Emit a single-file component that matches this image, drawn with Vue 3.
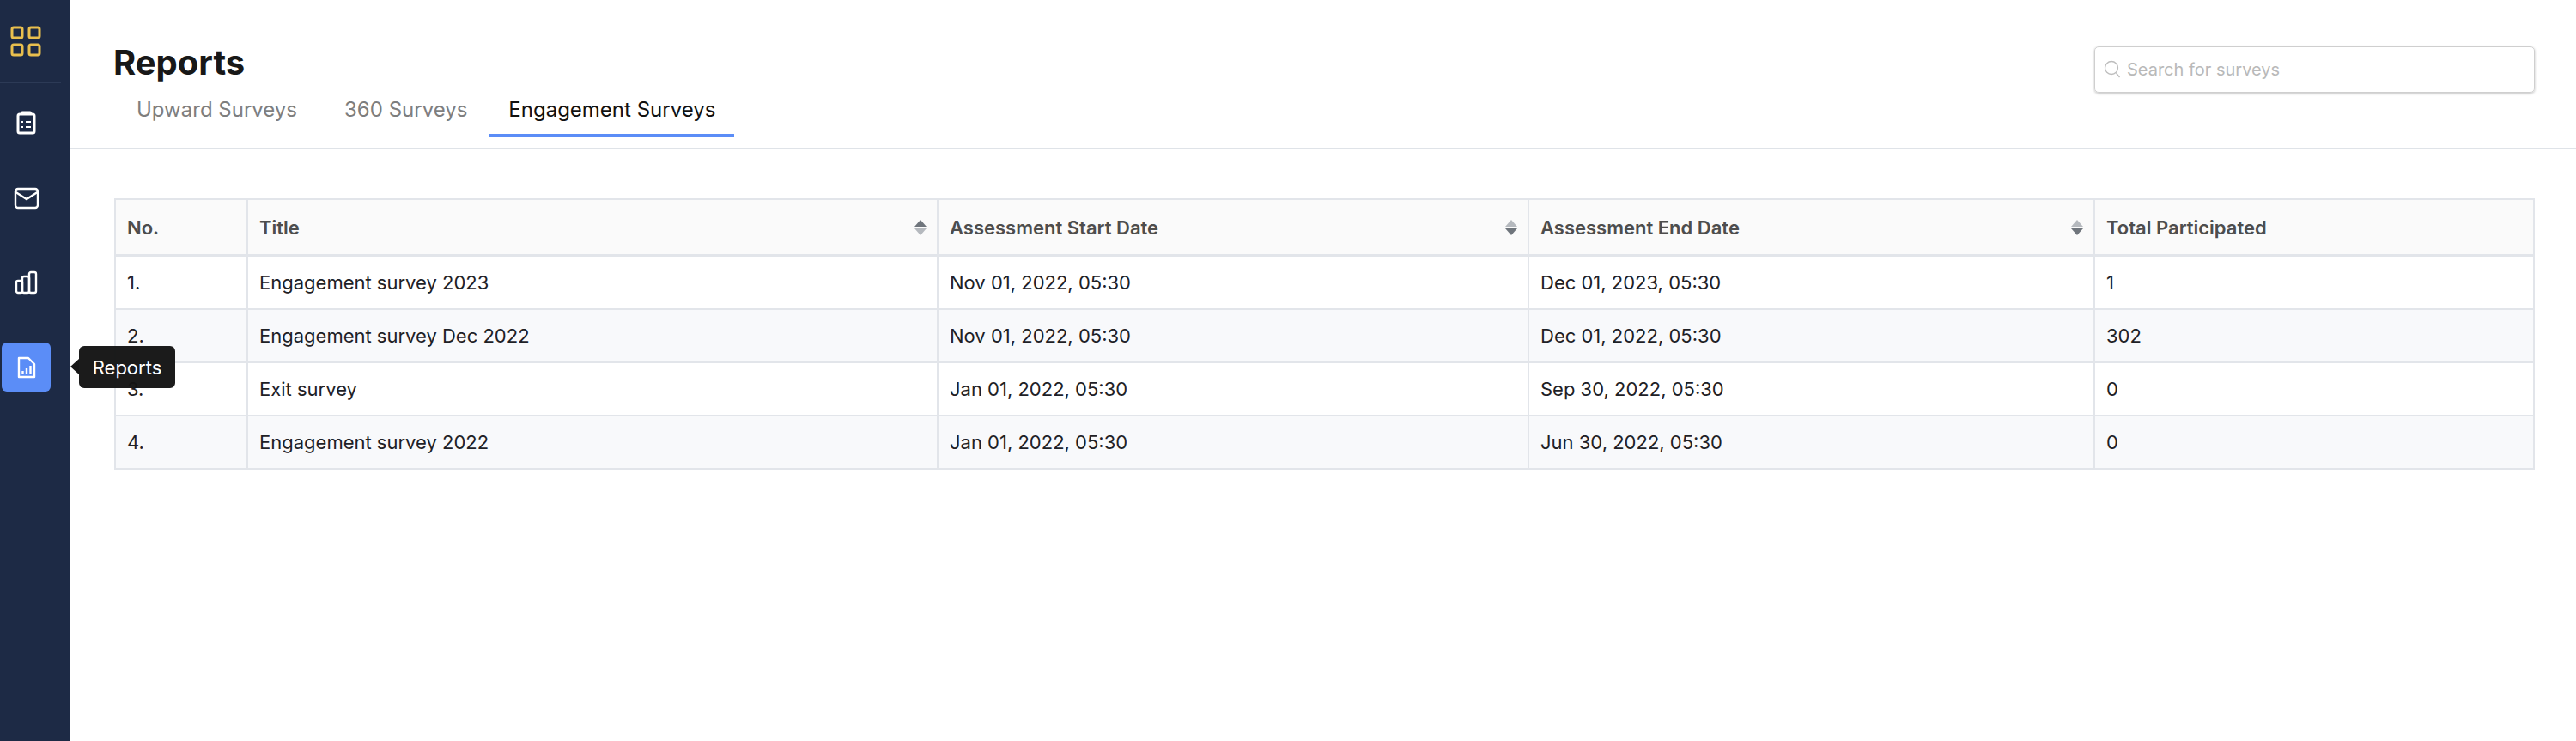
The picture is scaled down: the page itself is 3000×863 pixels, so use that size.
<script setup>
const columns = [
  { label: 'No.', sortable: false, sort: '' },
  { label: 'Title', sortable: true, sort: 'up' },
  { label: 'Assessment Start Date', sortable: true, sort: 'down' },
  { label: 'Assessment End Date', sortable: true, sort: 'down' },
  { label: 'Total Participated', sortable: false, sort: '' }
]
const rows = [
  ['1.', 'Engagement survey 2023', 'Nov 01, 2022, 05:30', 'Dec 01, 2023, 05:30', '1'],
  ['2.', 'Engagement survey Dec 2022', 'Nov 01, 2022, 05:30', 'Dec 01, 2022, 05:30', '302'],
  ['3.', 'Exit survey', 'Jan 01, 2022, 05:30', 'Sep 30, 2022, 05:30', '0'],
  ['4.', 'Engagement survey 2022', 'Jan 01, 2022, 05:30', 'Jun 30, 2022, 05:30', '0']
]
</script>

<template>
  <div class="app">
    <aside class="sidebar">
      <div class="logo">
        <svg width="36" height="36" viewBox="0 0 36 36" fill="none" stroke="#e9bf4e" stroke-width="3">
          <rect x="2" y="2" width="12" height="12" rx="2" />
          <rect x="22" y="2" width="12" height="12" rx="2" />
          <rect x="2" y="22" width="12" height="12" rx="2" />
          <rect x="22" y="22" width="12" height="12" rx="2" />
        </svg>
      </div>
      <nav class="nav">
        <div class="nav-item i1">
          <svg width="24" height="28" viewBox="0 0 24 28" fill="none" stroke="#fff" stroke-width="3">
            <rect x="2" y="4" width="19" height="22" rx="2" />
            <path d="M7 2.5h9" stroke-width="4" stroke-linecap="round" />
            <path d="M6 13h2M11 13h6M6 19h2M11 19h6" stroke-width="2" />
          </svg>
        </div>
        <div class="nav-item i2">
          <svg width="30" height="26" viewBox="0 0 30 26" fill="none" stroke="#fff" stroke-width="2.4">
            <rect x="2" y="2" width="26" height="22" rx="3" />
            <path d="M2.5 6l12.5 8 12.5-8" />
          </svg>
        </div>
        <div class="nav-item i3">
          <svg width="28" height="28" viewBox="0 0 28 28" fill="none" stroke="#fff" stroke-width="2.4">
            <rect x="2" y="12" width="7" height="14" rx="2" />
            <rect x="9" y="7" width="8" height="19" rx="2" />
            <rect x="17" y="2" width="8" height="24" rx="2" />
          </svg>
        </div>
        <div class="nav-item active">
          <svg width="22" height="26" viewBox="0 0 22 26" fill="none" stroke="#fff" stroke-width="2.4">
            <path d="M2 2h11l7 7v15H2z" stroke-linejoin="round" />
            <path d="M6.5 20v-3M11 20v-6M15.500 20v-9" stroke-width="2.4" />
          </svg>
          <div class="tooltip">Reports</div>
        </div>
      </nav>
    </aside>

    <main class="main">
      <header class="head">
        <div class="head-left">
          <h1 class="title">Reports</h1>
          <div class="tabs">
            <span class="tab t1">Upward Surveys</span>
            <span class="tab t2">360 Surveys</span>
            <span class="tab t3 on">Engagement Surveys</span>
          </div>
        </div>
        <div class="search">
          <svg width="20" height="22" viewBox="0 0 20 22" fill="none" stroke="#bdbdbd" stroke-width="1.300">
            <circle cx="9" cy="9" r="7.500" />
            <path d="M14.500 15l4 5" />
          </svg>
          <span class="placeholder">Search for surveys</span>
        </div>
      </header>

      <section class="content">
        <table class="table">
          <colgroup>
            <col class="c1" /><col class="c2" /><col class="c3" /><col class="c4" /><col class="c5" />
          </colgroup>
          <thead>
            <tr>
              <th v-for="c in columns" :key="c.label">
                <div class="th-in">
                  <span>{{ c.label }}</span>
                  <span v-if="c.sortable" class="sorter" :class="c.sort">
                    <i class="up"></i><i class="down"></i>
                  </span>
                </div>
              </th>
            </tr>
          </thead>
          <tbody>
            <tr v-for="r in rows" :key="r[0]">
              <td v-for="(v, i) in r" :key="i">{{ v }}</td>
            </tr>
          </tbody>
        </table>
      </section>
    </main>
  </div>
</template>

<style>
html, body { margin: 0; background: #fff; }
</style>

<style scoped>
.app {
  display: flex;
  width: 3000px;
  height: 863px;
  overflow: hidden;
  font-family: Inter, "Liberation Sans", sans-serif;
  background: #fff;
}
.sidebar {
  width: 81px;
  flex: none;
  background: #1d2a45;
}
.logo {
  height: 97px;
  width: 71px;
  margin-right: 10px;
  box-sizing: border-box;
  padding: 30px 0 0 12px;
  border-bottom: 1px solid #2c3a56;
}
.nav { display: flex; flex-direction: column; }
.nav-item {
  position: relative;
  width: 57px;
  height: 57px;
  margin-left: 2px;
  display: flex;
  align-items: center;
  justify-content: center;
  border-radius: 6px;
}
.i1 { margin-top: 17px; }
.i2 { margin-top: 31px; }
.i3 { margin-top: 41px; }
.active { margin-top: 42px; background: #5b8df7; }
.tooltip {
  position: absolute;
  left: 90px;
  top: 4px;
  width: 112px;
  height: 49px;
  box-sizing: border-box;
  display: flex;
  align-items: center;
  justify-content: center;
  border-radius: 6px;
  background: rgba(20, 20, 20, 0.97);
  color: #fff;
  font-size: 22px;
  z-index: 2;
}
.tooltip::before {
  content: "";
  position: absolute;
  left: -10px;
  top: 15px;
  width: 0;
  height: 0;
  border-top: 9px solid transparent;
  border-bottom: 9px solid transparent;
  border-right: 10px solid #171717;
}
.main { flex: 1; min-width: 0; }
.head {
  height: 174px;
  box-sizing: border-box;
  border-bottom: 2px solid #dfe3e8;
  display: flex;
  justify-content: space-between;
  padding-left: 51px;
}
.head-left { display: flex; flex-direction: column; }
.title {
  margin: 49px 0 0;
  font-size: 40px;
  line-height: 48px;
  font-weight: 700;
  color: #181818;
}
.tabs { display: flex; margin-top: 13px; padding-left: 5px; }
.tab {
  height: 50px;
  box-sizing: border-box;
  padding: 0 22px;
  font-size: 24px;
  line-height: 36px;
  color: #7e7e7e;
  white-space: nowrap;
}
.t2 { margin-left: 11px; }
.t3 { margin-left: 4px; }
.on {
  color: #111;
  border-bottom: 4px solid #5b8df7;
}
.search {
  width: 513px;
  height: 54px;
  margin: 54px 48px 0 0;
  box-sizing: border-box;
  border: 1px solid #cfcfcf;
  border-radius: 5px;
  box-shadow: 0 1px 3px rgba(0, 0, 0, 0.25);
  display: flex;
  align-items: center;
  padding-left: 10px;
  gap: 7px;
}
.placeholder { font-size: 20px; color: #b9b9b9; }
.content { padding: 57px 48px 0 52px; }
.table {
  width: 2819px;
  table-layout: fixed;
  border-collapse: collapse;
  font-size: 22px;
}
.c1 { width: 154px; }
.c2 { width: 804px; }
.c3 { width: 688px; }
.c4 { width: 659px; }
th, td {
  border: 2px solid #e2e5ea;
  padding: 0 13px;
  text-align: left;
}
th {
  height: 63px;
  background: #fafafa;
  color: #4d4d4d;
  font-weight: 600;
  border-bottom-width: 3px;
}
td {
  height: 60px;
  color: #1e2126;
}
tbody tr:nth-child(even) td { background: #f8f9fb; }
.th-in {
  display: flex;
  align-items: center;
  justify-content: space-between;
}
.sorter {
  display: flex;
  flex-direction: column;
  gap: 2px;
  margin-right: -1px;
}
.sorter i {
  display: block;
  width: 0;
  height: 0;
  border-left: 7px solid transparent;
  border-right: 7px solid transparent;
}
.sorter i.up { border-bottom: 8px solid #b5b9be; }
.sorter i.down { border-top: 8px solid #b5b9be; }
.sorter.up i.up { border-bottom-color: #6f757c; }
.sorter.down i.down { border-top-color: #6f757c; }
</style>
